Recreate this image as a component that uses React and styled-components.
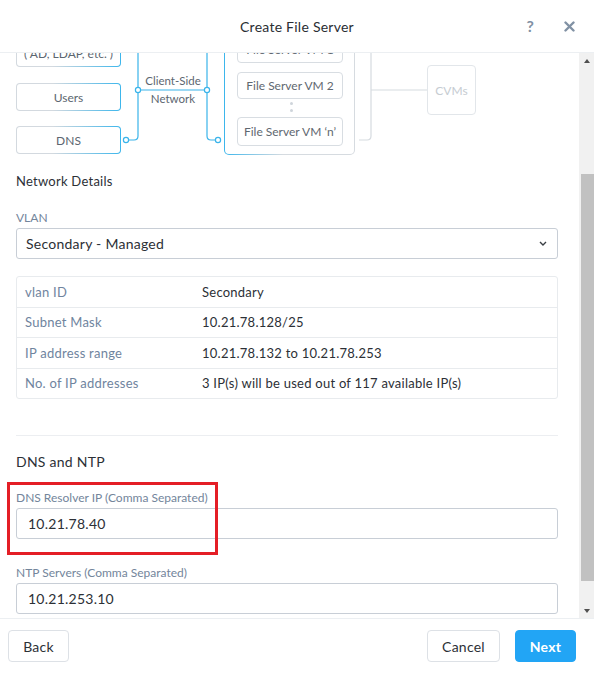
import {useRef, useLayoutEffect, useState} from 'react';
import styled, {createGlobalStyle} from 'styled-components';

const GlobalStyle = createGlobalStyle`
  html, body {
    margin: 0;
    padding: 0;
    height: 100%;
    background: #fff;
  }

  body {
    font-family: Lato, 'Open Sans', sans-serif;
    letter-spacing: 0.25px;
    color: #2c3036;
    overflow: hidden;
  }

  #root {
    height: 100%;
  }
`;

const Modal = styled.div`
  display: flex;
  flex-direction: column;
  height: 100vh;
  background: #fff;
`;

const Header = styled.header`
  flex: 0 0 52px;
  display: grid;
  grid-template-columns: 1fr auto 1fr;
  align-items: center;
  border-bottom: 1px solid #eceff2;
`;

const Title = styled.h1`
  grid-column: 2;
  margin: 0;
  font-size: 14px;
  font-weight: 400;
  color: #2a2e33;
`;

const HeaderIcons = styled.div`
  display: flex;
  justify-content: flex-end;
  align-items: center;
  gap: 30px;
  padding-right: 19px;
`;

const Help = styled.span`
  font-size: 16px;
  font-weight: 700;
  color: #8191a4;
  line-height: 1;
`;

const Main = styled.div`
  flex: 1;
  min-height: 0;
  display: flex;
`;

const Body = styled.div`
  position: relative;
  flex: 1;
  overflow: hidden;
  padding: 0 21px 35px 16px;
`;

const ScrollBar = styled.div`
  flex: 0 0 15px;
  display: flex;
  flex-direction: column;
  background: #f1f1f1;
`;

const Arrow = styled.div`
  flex: 0 0 15px;
  display: flex;
  align-items: center;
  justify-content: center;

  &::before {
    content: '';
    border-left: 3.5px solid transparent;
    border-right: 3.5px solid transparent;
    ${p => (p.$down ? 'border-top' : 'border-bottom')}: 4px solid #505050;
  }
`;

const Track = styled.div`
  position: relative;
  flex: 1;
`;

const Thumb = styled.div`
  position: absolute;
  left: 2px;
  right: 0;
  background: #c1c1c1;
`;

const Intro = styled.div`
  padding-top: 20px;
  font-size: 13px;
  line-height: 18px;
  color: #5c6670;
`;

const IntroTitle = styled.h2`
  margin: 0 0 8px;
  font-size: 14px;
  line-height: 18px;
  font-weight: 400;
  color: #2c3036;
`;

const Diagram = styled.div`
  position: relative;
  height: 140px;
  margin-top: 47px;
`;

const Wires = styled.svg`
  position: absolute;
  inset: 0;
  overflow: visible;
`;

const Node = styled.div`
  position: absolute;
  left: ${p => p.$x}px;
  top: ${p => p.$y}px;
  width: ${p => p.$w}px;
  height: ${p => p.$h}px;
  box-sizing: border-box;
  display: flex;
  flex-direction: column;
  align-items: center;
  justify-content: center;
  border-radius: 4px;
  font-size: 12px;
  line-height: 15px;
  letter-spacing: 0;
  color: #5c6670;
  white-space: nowrap;
  border: 1px solid transparent;
  background: linear-gradient(#fff, #fff) padding-box,
    linear-gradient(90deg, #d3d9df 35%, #3cb6ec) border-box;
`;

const VmGroup = styled(Node)`
  border-radius: 5px;
  background: linear-gradient(#fff, #fff) padding-box,
    linear-gradient(90deg, #3cb6ec, #d6dbe0 45%) border-box;
`;

const VmBox = styled(Node)`
  background: #fff;
  border: 1px solid #d8dde2;
  color: #5f6870;
`;

const CvmBox = styled(Node)`
  background: #fff;
  border: 1px solid #e2e6ea;
  color: #c6ccd2;
`;

const Caption = styled.div`
  position: absolute;
  left: ${p => p.$x}px;
  top: ${p => p.$y}px;
  transform: translate(-50%, -50%);
  font-size: 11.5px;
  letter-spacing: 0;
  color: #5c6670;
  white-space: nowrap;
`;

const Dots = styled.div`
  position: absolute;
  left: 274px;
  top: 85px;
  display: flex;
  flex-direction: column;
  gap: 4px;

  &::before,
  &::after {
    content: '';
    width: 3px;
    height: 3px;
    border-radius: 50%;
    background: #cfd5db;
  }
`;

const SectionTitle = styled.h3`
  margin: ${p => p.$top}px 0 0;
  font-size: ${p => p.$size}px;
  line-height: ${p => p.$size + 4}px;
  font-weight: 400;
  color: #2c3036;
`;

const Field = styled.div`
  position: relative;
  margin-top: ${p => p.$top}px;
`;

const Label = styled.div`
  font-size: 12px;
  line-height: 16px;
  letter-spacing: 0;
  color: #73859b;
  margin-bottom: 2px;
`;

const Select = styled.div`
  height: 31px;
  box-sizing: border-box;
  display: flex;
  align-items: center;
  justify-content: space-between;
  padding: 0 10px 0 9px;
  border: 1px solid #c8ced6;
  border-radius: 3px;
  font-size: 14px;
  color: #2c3036;
`;

const Input = styled.div`
  height: 31px;
  box-sizing: border-box;
  display: flex;
  align-items: center;
  padding: 0 11px;
  border: 1px solid #c8ced6;
  border-radius: 3px;
  font-size: 14px;
  color: #2c3036;
`;

const Table = styled.div`
  margin-top: 17px;
  border: 1px solid #e8ebee;
  border-radius: 3px;
`;

const Row = styled.div`
  display: grid;
  grid-template-columns: 177px 1fr;
  align-items: center;
  height: 29.5px;
  padding-left: 8px;
  font-size: 13px;

  & + & {
    border-top: 1px solid #e8ebee;
  }
`;

const Key = styled.span`
  color: #6f849e;
`;

const Value = styled.span`
  color: #2c3036;
`;

const Divider = styled.hr`
  margin: 36px 0 0;
  border: none;
  border-top: 1px solid #eceef1;
`;

const Highlight = styled.div`
  position: absolute;
  left: -9px;
  top: -8px;
  width: 211px;
  height: 73px;
  box-sizing: border-box;
  border: 3px solid #e41e26;
  pointer-events: none;
`;

const Footer = styled.footer`
  flex: 0 0 54px;
  display: flex;
  align-items: center;
  gap: 15px;
  padding: 0 18px 0 8px;
  border-top: 1px solid #eceff2;
`;

const Button = styled.button`
  height: 32px;
  width: ${p => p.$w}px;
  margin-left: ${p => (p.$push ? 'auto' : '0')};
  border-radius: 4px;
  border: 1px solid ${p => (p.$primary ? '#22a5f5' : '#dde1e6')};
  background: ${p => (p.$primary ? '#22a5f5' : '#fff')};
  color: ${p => (p.$primary ? '#fff' : '#2c3036')};
  font-family: Lato, 'Open Sans', sans-serif;
  letter-spacing: 0.25px;
  font-size: 14px;
  font-weight: ${p => (p.$primary ? 700 : 400)};
  padding: 0;
`;

const blue = '#3ab4ea';
const grey = '#d6dbe0';

const Dot = ({x, y}) => (
    <circle cx={x} cy={y} r="2.6" fill="#fff" stroke={blue} strokeWidth="1.2"/>
);

const rows = [
    ['vlan ID', 'Secondary'],
    ['Subnet Mask', '10.21.78.128/25'],
    ['IP address range', '10.21.78.132 to 10.21.78.253'],
    ['No. of IP addresses', '3 IP(s) will be used out of 117 available IP(s)'],
];

const App = () => {
    const body = useRef();
    const diagram = useRef();
    const [thumb, setThumb] = useState({top: 0, height: 0});

    useLayoutEffect(() => {
        const el = body.current;
        el.scrollTop = diagram.current.offsetTop + 36;
        const track = el.clientHeight - 30;
        setThumb({
            top: (el.scrollTop / el.scrollHeight) * track,
            height: (el.clientHeight / el.scrollHeight) * track,
        });
    }, []);

    return (
        <Modal>
            <GlobalStyle/>
            <Header>
                <Title>Create File Server</Title>
                <HeaderIcons>
                    <Help>?</Help>
                    <svg width="11" height="11" viewBox="0 0 11 11">
                        <path d="M1.5 1.5 L9.5 9.5 M9.5 1.5 L1.5 9.5" stroke="#8191a4" strokeWidth="2.4"
                              strokeLinecap="round"/>
                    </svg>
                </HeaderIcons>
            </Header>

            <Main>
                <Body ref={body}>
                    <Intro>
                        <IntroTitle>Client-Side Network</IntroTitle>
                        Connect the file server VMs to the client-side network.
                    </Intro>

                    <Diagram ref={diagram}>
                        <Wires width="542" height="140">
                            <path d="M110 29 H118 Q122 29 122 33 V119 Q122 123 118 123 H110" fill="none"
                                  stroke={blue} strokeWidth="1.2"/>
                            <path d="M122 73 H191" stroke={blue} strokeWidth="1.2"/>
                            <path d="M202 29 H195 Q191 29 191 33 V119 Q191 123 195 123 H202" fill="none"
                                  stroke={blue} strokeWidth="1.2"/>
                            <path d="M343 12 H351 Q355 12 355 16 V119 Q355 123 351 123 H343" fill="none"
                                  stroke={grey} strokeWidth="1.2"/>
                            <path d="M355 73 H411" stroke={grey} strokeWidth="1.2"/>
                            <Dot x={110} y={29}/>
                            <Dot x={110} y={123}/>
                            <Dot x={122} y={73}/>
                            <Dot x={191} y={73}/>
                            <Dot x={202} y={29}/>
                            <Dot x={202} y={123}/>
                        </Wires>

                        <Node $x={0} $y={8} $w={105} $h={42}>
                            <span>Directory Services</span>
                            <span>( AD, LDAP, etc. )</span>
                        </Node>
                        <Node $x={0} $y={66} $w={105} $h={28}>Users</Node>
                        <Node $x={0} $y={109} $w={105} $h={28}>DNS</Node>

                        <Caption $x={157} $y={63}>Client-Side</Caption>
                        <Caption $x={157} $y={81}>Network</Caption>

                        <VmGroup $x={208} $y={4} $w={131} $h={134}/>
                        <VmBox $x={221} $y={18} $w={106} $h={28}>File Server VM 1</VmBox>
                        <VmBox $x={221} $y={55} $w={106} $h={27}>File Server VM 2</VmBox>
                        <Dots/>
                        <VmBox $x={221} $y={100} $w={106} $h={29}>File Server VM ‘n’</VmBox>

                        <CvmBox $x={411} $y={48} $w={49} $h={50}>CVMs</CvmBox>
                    </Diagram>

                    <SectionTitle $size={13} $top={16}>Network Details</SectionTitle>

                    <Field $top={20}>
                        <Label>VLAN</Label>
                        <Select>
                            <span>Secondary - Managed</span>
                            <svg width="8" height="5" viewBox="0 0 8 5">
                                <path d="M1 1 L4 4 L7 1" fill="none" stroke="#3a3f45" strokeWidth="1.4"/>
                            </svg>
                        </Select>
                    </Field>

                    <Table>
                        {rows.map(([k, v]) => (
                            <Row key={k}>
                                <Key>{k}</Key>
                                <Value>{v}</Value>
                            </Row>
                        ))}
                    </Table>

                    <Divider/>

                    <SectionTitle $size={14} $top={17}>DNS and NTP</SectionTitle>

                    <Field $top={19}>
                        <Label>DNS Resolver IP (Comma Separated)</Label>
                        <Input>10.21.78.40</Input>
                        <Highlight/>
                    </Field>

                    <Field $top={26}>
                        <Label>NTP Servers (Comma Separated)</Label>
                        <Input>10.21.253.10</Input>
                    </Field>
                </Body>

                <ScrollBar>
                    <Arrow/>
                    <Track>
                        <Thumb style={{top: thumb.top, height: thumb.height}}/>
                    </Track>
                    <Arrow $down/>
                </ScrollBar>
            </Main>

            <Footer>
                <Button $w={61}>Back</Button>
                <Button $w={73} $push>Cancel</Button>
                <Button $w={61} $primary>Next</Button>
            </Footer>
        </Modal>
    );
};

export default App;
